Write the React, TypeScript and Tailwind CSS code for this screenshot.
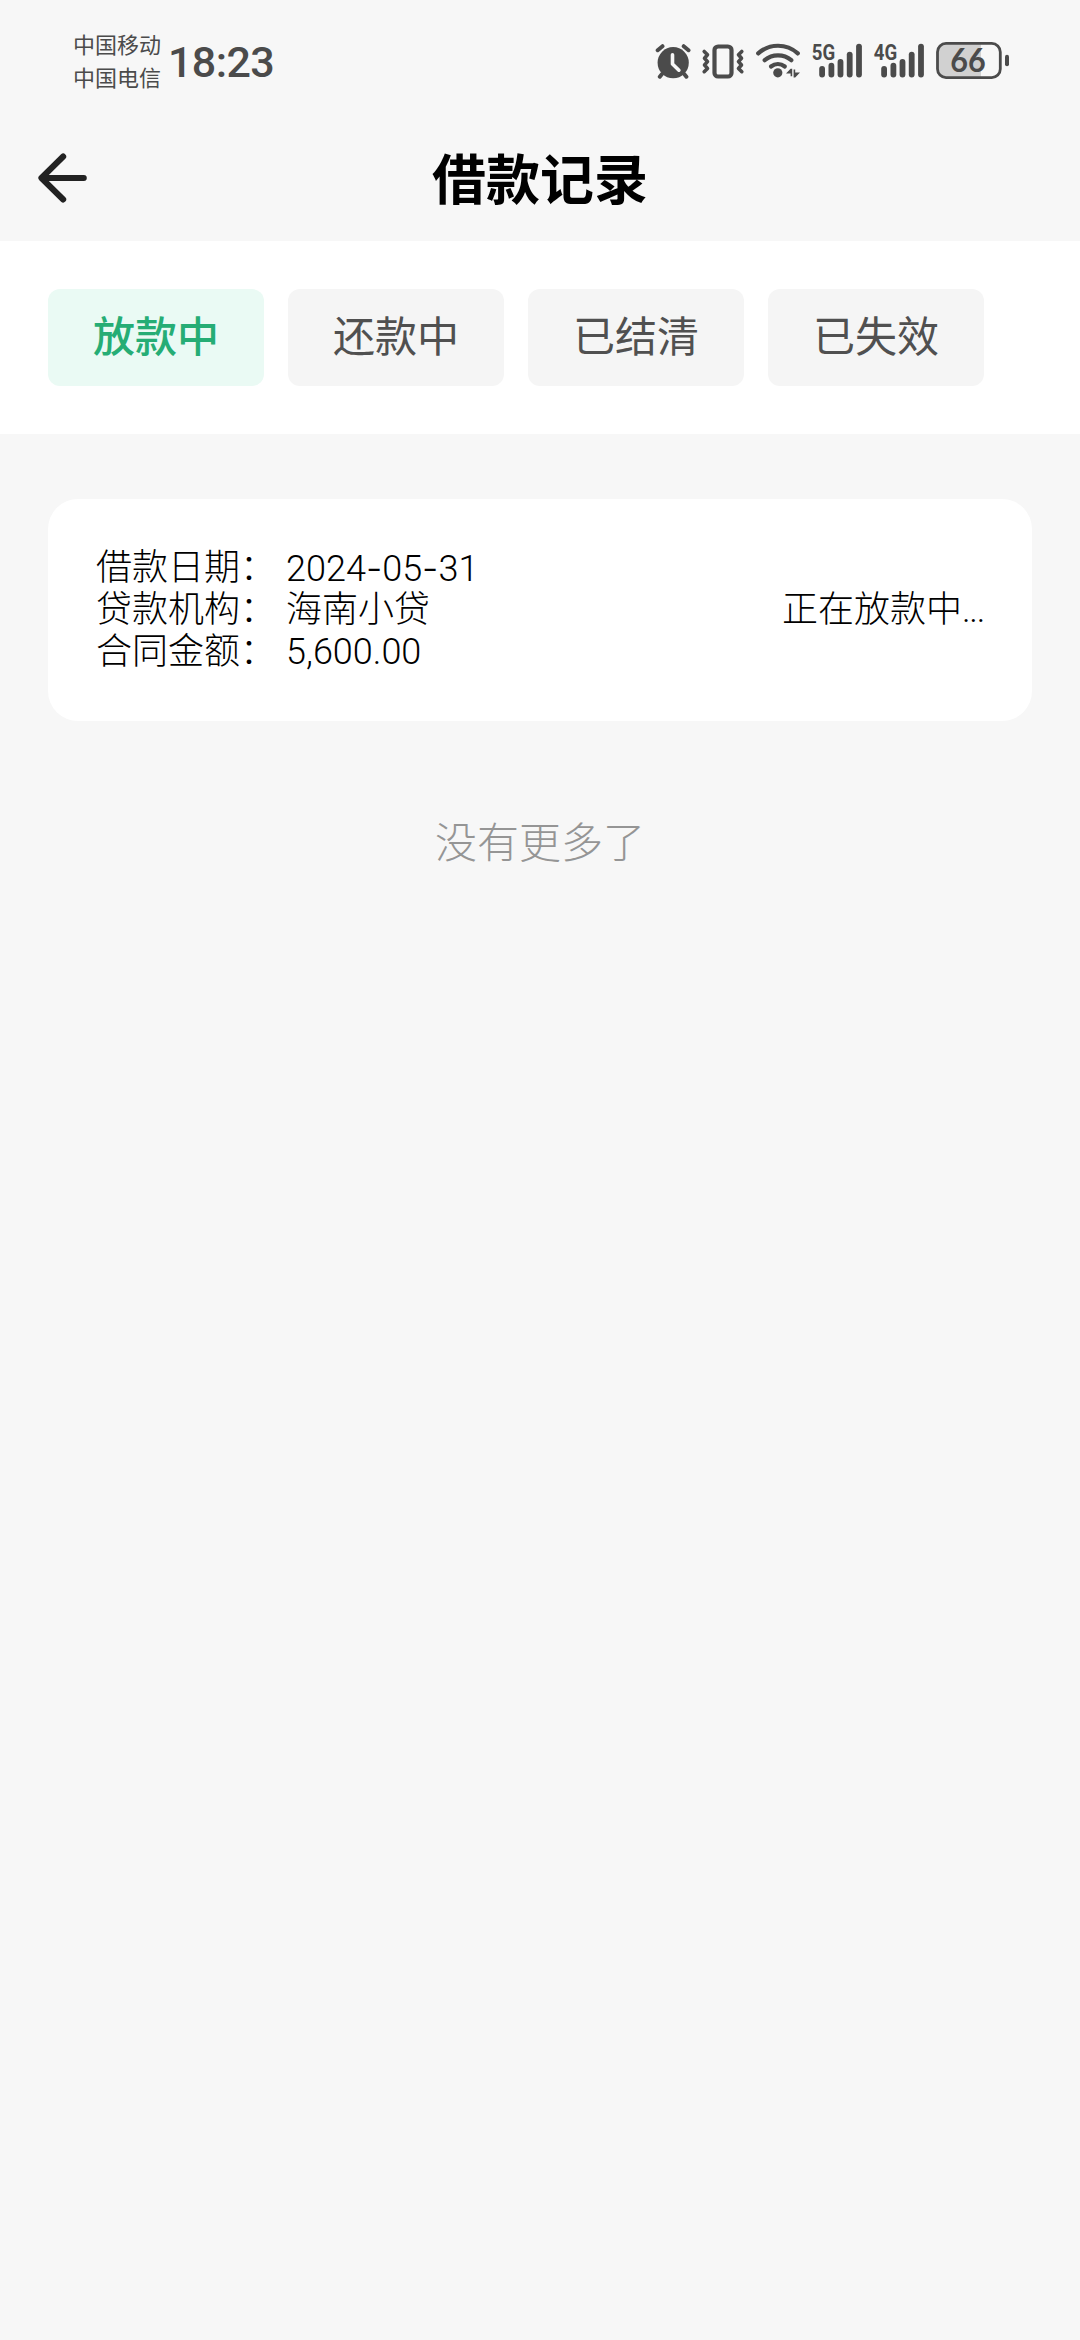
import { Fragment } from 'react';

const INK = '#4b4b4b';

function AlarmIcon() {
  return (
    <svg width="36" height="38" viewBox="654 42 36 38" fill="none">
      <circle cx="672.2" cy="62.7" r="15.6" fill={INK} />
      <path d="M656.7 50.2l4.8-4M687.5 50.2l-4.8-4M661 74l-2.2 2.7M683.2 74l2.2 2.7" stroke={INK} strokeWidth="4" strokeLinecap="round" />
      <path d="M671.5 54.8v9.2l6.4 6.2" stroke="#f7f7f7" strokeWidth="3.6" strokeLinecap="round" strokeLinejoin="round" />
    </svg>
  );
}

function VibrateIcon() {
  return (
    <svg width="44" height="38" viewBox="701 42 44 38" fill="none" stroke={INK} strokeLinecap="round" strokeLinejoin="round">
      <rect x="714.5" y="46.5" width="17" height="30" rx="3.6" strokeWidth="4.2" />
      <path d="M704.2 51.5l3.3 3.3-3 3.4 3 3.4-3 3.4 3 3.4-3.3 3.3" strokeWidth="3.6" />
      <path d="M741.8 51.5l-3.3 3.3 3 3.4-3 3.4 3 3.4-3 3.4 3.3 3.3" strokeWidth="3.6" />
    </svg>
  );
}

function WifiIcon() {
  return (
    <svg width="46" height="38" viewBox="755 42 46 38" fill="none">
      <g stroke={INK} strokeWidth="4.2" strokeLinecap="round">
        <path d="M758.2 53.4a29.5 29.5 0 0 1 39.6 0" />
        <path d="M764.7 60.2a20.5 20.5 0 0 1 26.6 0" />
        <path d="M771 66.5a11.4 11.4 0 0 1 13.8 0" />
      </g>
      <circle cx="777.8" cy="72.8" r="4.6" fill={INK} />
      <path d="M786 73.6l4.6-4.8h1.6v7.4h-1.6v-2.6zM800 72.6l-4.8 4.8h-1.6v-8h1.6v3.2z" fill={INK} />
    </svg>
  );
}

function SignalIcon({ label }: { label: string }) {
  const bars = [
    [8.2, 24],
    [17.5, 20.8],
    [26.6, 17],
    [35.8, 9.7],
    [45.1, 1.7],
  ];
  return (
    <svg width="52" height="38" viewBox="0 0 52 38" fill={INK} className="overflow-visible">
      {bars.map(([x, y]) => (
        <rect key={x} x={x} y={y} width="5.8" height={35.4 - y} rx="2.9" />
      ))}
      <text x="0.8" y="18.4" textLength="23.4" lengthAdjust="spacingAndGlyphs" className="font-['Roboto'] text-[22px] font-bold">
        {label}
      </text>
    </svg>
  );
}

function BatteryIcon() {
  return (
    <svg width="76" height="38" viewBox="935 42 76 38" fill="none" className="overflow-visible">
      <path d="M981 43.5h-34a9 9 0 0 0-9 9v16a9 9 0 0 0 9 9h34z" fill="#d1d1d1" />
      <rect x="937.5" y="43.4" width="62.8" height="34.2" rx="8.5" stroke={INK} strokeWidth="2.8" />
      <rect x="1005" y="54.8" width="4" height="11.4" rx="2" fill={INK} />
      <text x="950.3" y="72" textLength="35.5" lengthAdjust="spacingAndGlyphs" fill={INK} className="font-['Lato'] text-[32px] font-bold">
        66
      </text>
    </svg>
  );
}

function StatusBar() {
  return (
    <div className="flex h-[120px] items-start justify-between pr-[69px] pl-[73px] text-[#4b4b4b]">
      <div className="flex">
        <div className="pt-[27px] text-[22px] leading-[33px]">
          <div>中国移动</div>
          <div>中国电信</div>
        </div>
        <div className="mt-[32px] ml-[7px] font-['Roboto'] text-[43px] leading-[60px] font-medium tracking-[-0.6px]">18:23</div>
      </div>
      <div className="flex gap-[10px] pt-[42px]">
        <AlarmIcon />
        <VibrateIcon />
        <WifiIcon />
        <SignalIcon label="5G" />
        <SignalIcon label="4G" />
        <BatteryIcon />
      </div>
    </div>
  );
}

function Header() {
  return (
    <header className="grid h-[121px] grid-cols-[1fr_auto_1fr] items-start">
      <button className="mt-[31px] ml-[36px] w-[54px]" aria-label="返回">
        <svg width="54" height="54" viewBox="36 151 54 54" fill="none" stroke="#222" strokeWidth="6" strokeLinecap="round" strokeLinejoin="round">
          <path d="M63.2 156.5L41.4 178l21.8 21.5M42 178h41.8" />
        </svg>
      </button>
      <h1 className="mt-[17px] text-[54px] leading-[80px] font-bold text-black">借款记录</h1>
    </header>
  );
}

const tabs = ['放款中', '还款中', '已结清', '已失效'];

function Tabs() {
  return (
    <nav className="flex h-[193px] gap-[24px] bg-white px-[48px] pt-[48px]">
      {tabs.map((tab, i) => (
        <button
          key={tab}
          className={
            'h-[97px] w-[216px] rounded-[12px] pb-[9px] text-[42px] ' +
            (i === 0 ? 'bg-[#eafaf4] font-medium text-[#26ad75]' : 'bg-[#f5f5f5] font-normal text-[#505050]')
          }
        >
          {tab}
        </button>
      ))}
    </nav>
  );
}

const rows = [
  ['借款日期', '2024-05-31'],
  ['贷款机构', '海南小贷'],
  ['合同金额', '5,600.00'],
];

/* Inter's hyphen is wider than Roboto's, which keeps the date parts apart. */
function Value({ text }: { text: string }) {
  return text.split('-').map((part, i) => (
    <Fragment key={i}>
      {i > 0 && <span className="font-['Inter']">-</span>}
      {part}
    </Fragment>
  ));
}

function RecordCard() {
  return (
    <section className="mx-[48px] mt-[65px] flex h-[222px] items-center justify-between rounded-[30px] bg-white px-[48px] font-['Roboto','Noto_Sans_CJK_SC',sans-serif] text-[36px] leading-[42px] font-light text-black">
      <dl>
        {rows.map(([label, value]) => (
          <div key={label} className="flex h-[42px]">
            <dt className="w-[190px]">{label}：</dt>
            <dd>
              <Value text={value} />
            </dd>
          </div>
        ))}
      </dl>
      <span>
        正在放款中<span className="tracking-[-1.3px]">...</span>
      </span>
    </section>
  );
}

export default function App() {
  return (
    <div className="min-h-[2340px] w-[1080px] bg-[#f7f7f7] font-['Noto_Sans_CJK_SC',sans-serif]">
      <StatusBar />
      <Header />
      <Tabs />
      <RecordCard />
      <p className="mt-[88px] text-center text-[42px] leading-[62px] font-light text-[#959595]">没有更多了</p>
    </div>
  );
}
